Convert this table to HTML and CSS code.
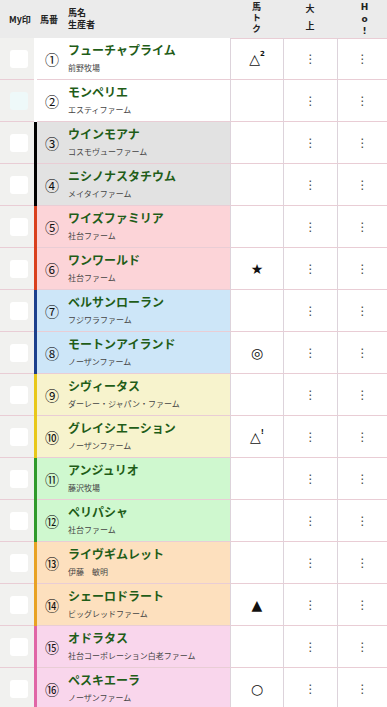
FILE: index.html
```html
<!DOCTYPE html>
<html lang="ja">
<head>
<meta charset="utf-8">
<link rel="stylesheet" href="styles.css">
</head>
<body>
<div class="table">
  <div class="row head">
    <div class="c-my"><span class="h-my">My印</span></div>
    <div class="c-bar"></div>
    <div class="c-main h-main"><span class="h-num">馬番</span><span class="h-name">馬名<br>生産者</span></div>
    <div class="c-col"><span class="h-v">馬トク</span></div>
    <div class="c-col"><span class="h-v h-v2">大上</span></div>
    <div class="c-col"><span class="h-v h-v3">Ho!</span></div>
  </div>

  <div class="row f1">
    <div class="c-my"><span class="box"></span></div><div class="c-bar"></div>
    <div class="c-main"><span class="num">①</span><div class="nm"><div class="horse">フューチャプライム</div><div class="breeder">前野牧場</div></div></div>
    <div class="c-col mark"><span>△</span><span class="sup">2</span></div><div class="c-col dots">⋮</div><div class="c-col dots">⋮</div>
  </div>
  <div class="row f1">
    <div class="c-my"><span class="box box-alt"></span></div><div class="c-bar"></div>
    <div class="c-main"><span class="num">②</span><div class="nm"><div class="horse">モンペリエ</div><div class="breeder">エスティファーム</div></div></div>
    <div class="c-col mark"></div><div class="c-col dots">⋮</div><div class="c-col dots">⋮</div>
  </div>
  <div class="row f2">
    <div class="c-my"><span class="box"></span></div><div class="c-bar"></div>
    <div class="c-main"><span class="num">③</span><div class="nm"><div class="horse">ウインモアナ</div><div class="breeder">コスモヴューファーム</div></div></div>
    <div class="c-col mark"></div><div class="c-col dots">⋮</div><div class="c-col dots">⋮</div>
  </div>
  <div class="row f2">
    <div class="c-my"><span class="box"></span></div><div class="c-bar"></div>
    <div class="c-main"><span class="num">④</span><div class="nm"><div class="horse">ニシノナスタチウム</div><div class="breeder">メイタイファーム</div></div></div>
    <div class="c-col mark"></div><div class="c-col dots">⋮</div><div class="c-col dots">⋮</div>
  </div>
  <div class="row f3">
    <div class="c-my"><span class="box"></span></div><div class="c-bar"></div>
    <div class="c-main"><span class="num">⑤</span><div class="nm"><div class="horse">ワイズファミリア</div><div class="breeder">社台ファーム</div></div></div>
    <div class="c-col mark"></div><div class="c-col dots">⋮</div><div class="c-col dots">⋮</div>
  </div>
  <div class="row f3">
    <div class="c-my"><span class="box"></span></div><div class="c-bar"></div>
    <div class="c-main"><span class="num">⑥</span><div class="nm"><div class="horse">ワンワールド</div><div class="breeder">社台ファーム</div></div></div>
    <div class="c-col mark">★</div><div class="c-col dots">⋮</div><div class="c-col dots">⋮</div>
  </div>
  <div class="row f4">
    <div class="c-my"><span class="box"></span></div><div class="c-bar"></div>
    <div class="c-main"><span class="num">⑦</span><div class="nm"><div class="horse">ベルサンローラン</div><div class="breeder">フジワラファーム</div></div></div>
    <div class="c-col mark"></div><div class="c-col dots">⋮</div><div class="c-col dots">⋮</div>
  </div>
  <div class="row f4">
    <div class="c-my"><span class="box"></span></div><div class="c-bar"></div>
    <div class="c-main"><span class="num">⑧</span><div class="nm"><div class="horse">モートンアイランド</div><div class="breeder">ノーザンファーム</div></div></div>
    <div class="c-col mark">◎</div><div class="c-col dots">⋮</div><div class="c-col dots">⋮</div>
  </div>
  <div class="row f5">
    <div class="c-my"><span class="box"></span></div><div class="c-bar"></div>
    <div class="c-main"><span class="num">⑨</span><div class="nm"><div class="horse">シヴィータス</div><div class="breeder">ダーレー・ジャパン・ファーム</div></div></div>
    <div class="c-col mark"></div><div class="c-col dots">⋮</div><div class="c-col dots">⋮</div>
  </div>
  <div class="row f5">
    <div class="c-my"><span class="box"></span></div><div class="c-bar"></div>
    <div class="c-main"><span class="num">⑩</span><div class="nm"><div class="horse">グレイシエーション</div><div class="breeder">ノーザンファーム</div></div></div>
    <div class="c-col mark"><span>△</span><span class="sup">!</span></div><div class="c-col dots">⋮</div><div class="c-col dots">⋮</div>
  </div>
  <div class="row f6">
    <div class="c-my"><span class="box"></span></div><div class="c-bar"></div>
    <div class="c-main"><span class="num">⑪</span><div class="nm"><div class="horse">アンジュリオ</div><div class="breeder">藤沢牧場</div></div></div>
    <div class="c-col mark"></div><div class="c-col dots">⋮</div><div class="c-col dots">⋮</div>
  </div>
  <div class="row f6">
    <div class="c-my"><span class="box"></span></div><div class="c-bar"></div>
    <div class="c-main"><span class="num">⑫</span><div class="nm"><div class="horse">ペリパシャ</div><div class="breeder">社台ファーム</div></div></div>
    <div class="c-col mark"></div><div class="c-col dots">⋮</div><div class="c-col dots">⋮</div>
  </div>
  <div class="row f7">
    <div class="c-my"><span class="box"></span></div><div class="c-bar"></div>
    <div class="c-main"><span class="num">⑬</span><div class="nm"><div class="horse">ライヴギムレット</div><div class="breeder">伊藤　敏明</div></div></div>
    <div class="c-col mark"></div><div class="c-col dots">⋮</div><div class="c-col dots">⋮</div>
  </div>
  <div class="row f7">
    <div class="c-my"><span class="box"></span></div><div class="c-bar"></div>
    <div class="c-main"><span class="num">⑭</span><div class="nm"><div class="horse">シェーロドラート</div><div class="breeder">ビッグレッドファーム</div></div></div>
    <div class="c-col mark">▲</div><div class="c-col dots">⋮</div><div class="c-col dots">⋮</div>
  </div>
  <div class="row f8">
    <div class="c-my"><span class="box"></span></div><div class="c-bar"></div>
    <div class="c-main"><span class="num">⑮</span><div class="nm"><div class="horse">オドラタス</div><div class="breeder">社台コーポレーション白老ファーム</div></div></div>
    <div class="c-col mark"></div><div class="c-col dots">⋮</div><div class="c-col dots">⋮</div>
  </div>
  <div class="row f8">
    <div class="c-my"><span class="box"></span></div><div class="c-bar"></div>
    <div class="c-main"><span class="num">⑯</span><div class="nm"><div class="horse">ペスキエーラ</div><div class="breeder">ノーザンファーム</div></div></div>
    <div class="c-col mark">○</div><div class="c-col dots">⋮</div><div class="c-col dots">⋮</div>
  </div>
</div>
</body>
</html>
```

FILE: styles.css
```css
html, body {
  margin: 0;
  padding: 0;
  background: #fff;
}
body {
  font-family: "Noto Sans CJK JP", "Noto Sans", "DejaVu Sans", sans-serif;
  color: #222;
  width: 387px;
  overflow: hidden;
}
.table {
  display: flex;
  flex-direction: column;
}
.row {
  display: grid;
  grid-template-columns: 34px 3px 193px 53px 54px 50px;
  height: 42px;
}
.row > div {
  border-bottom: 1px solid #e9cdd5;
  box-sizing: border-box;
}
.row > .c-bar {
  border-bottom: none;
}
.c-my {
  background: #f1f1ef;
  display: flex;
  align-items: center;
  justify-content: center;
  padding-left: 4px;
}
.box {
  width: 18px;
  height: 18px;
  background: #fff;
  border-radius: 3px;
  display: block;
}
.box-alt {
  background: #eef9f9;
}
.c-main {
  display: flex;
  align-items: center;
}
.num {
  width: 30px;
  text-align: center;
  font-size: 14px;
  line-height: 1;
  padding-top: 1px;
  color: #111;
}
.nm {
  margin-left: 1px;
  display: flex;
  flex-direction: column;
  padding-bottom: 1px;
}
.horse {
  font-size: 12px;
  font-weight: bold;
  color: #1f5d18;
  line-height: 16px;
  white-space: nowrap;
}
.breeder {
  font-size: 8px;
  color: #444;
  line-height: 12px;
  margin-top: 4px;
  white-space: nowrap;
}
.c-col {
  border-left: 1px solid #ddd3db;
  display: flex;
  align-items: center;
  justify-content: center;
}
.mark {
  font-size: 14px;
  color: #111;
  font-family: "DejaVu Sans", sans-serif;
  line-height: 1;
}
.mark .sup {
  font-size: 7px;
  font-weight: bold;
  align-self: flex-start;
  margin-top: 13px;
  margin-left: 0;
  line-height: 1;
}
.dots {
  font-size: 12px;
  color: #444;
  font-family: "DejaVu Sans", sans-serif;
}

/* frame colours */
.f1 .c-bar { background: #fff; }
.f1 .c-main { background: #fff; }
.f2 .c-bar { background: #000; }
.f2 .c-main { background: #e2e2e2; }
.f3 .c-bar { background: #d9401e; }
.f3 .c-main { background: #fcd4d8; }
.f4 .c-bar { background: #1c3f8c; }
.f4 .c-main { background: #cde6f8; }
.f5 .c-bar { background: #e8c81a; }
.f5 .c-main { background: #f7f3cd; }
.f6 .c-bar { background: #2f9a2a; }
.f6 .c-main { background: #cff8cf; }
.f7 .c-bar { background: #e8a224; }
.f7 .c-main { background: #fde0be; }
.f8 .c-bar { background: #e066a6; }
.f8 .c-main { background: #f9d6ec; }

/* header */
.row.head {
  height: 38px;
  background: #ebebeb;
}
.head > div {
  font-size: 9px;
  font-weight: bold;
  color: #222;
  border-bottom: 1px solid #e9cdd5;
}
.head .c-my {
  background: #ebebeb;
  justify-content: flex-start;
  padding-left: 9px;
}
.head .c-bar {
  background: #ebebeb;
  border-bottom: 1px solid #e9cdd5;
}
.h-my {
  white-space: nowrap;
  line-height: 1;
}
.h-main {
  display: flex;
  align-items: center;
}
.h-num {
  width: 31px;
  padding-left: 3px;
  box-sizing: border-box;
}
.h-name {
  line-height: 12px;
  margin-top: -1px;
}
.head .c-col {
  border-left: none;
  align-items: flex-start;
}
.h-v {
  writing-mode: vertical-rl;
  text-orientation: upright;
  line-height: 1;
  letter-spacing: 2px;
  margin-top: 2px;
}
.h-v2 {
  letter-spacing: 8px;
  margin-top: 4px;
}
.h-v3 {
  font-family: "DejaVu Sans", sans-serif;
  letter-spacing: 2px;
  margin-top: 2px;
  margin-left: 4px;
}
```
